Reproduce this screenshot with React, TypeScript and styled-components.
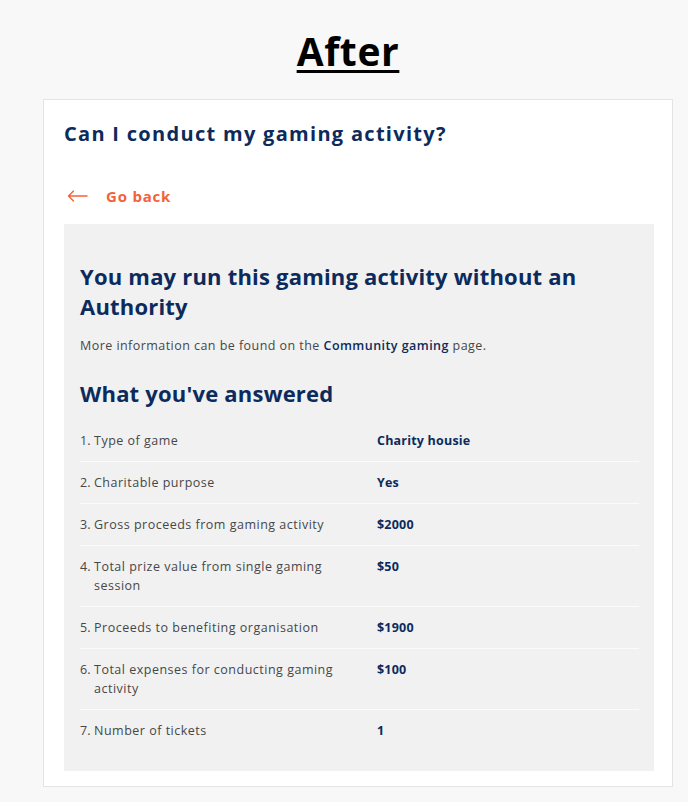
import React from "react";
import styled, { createGlobalStyle } from "styled-components";

const Global = createGlobalStyle`
  html, body { margin: 0; padding: 0; background: #f8f8f8; }
  body { font-family: "Open Sans", "Liberation Sans", sans-serif; }
  * { box-sizing: border-box; }
`;

const navy = "#0c2b5c";
const orange = "#f4623a";

const Page = styled.div`
  width: 688px;
  padding: 28px 0 16px 0;
  display: flex;
  flex-direction: column;
`;

const Title = styled.h1`
  margin: 0 0 25px 0;
  padding-left: 8px;
  text-align: center;
  font-size: 39px;
  line-height: 46px;
  font-weight: 700;
  letter-spacing: 0.6px;
  color: #000;
  text-decoration: underline;
  text-decoration-thickness: 3px;
  text-underline-offset: 4px;
`;

const Card = styled.section`
  width: 630px;
  margin-left: 43px;
  background: #fff;
  border: 1px solid #e4e4e4;
  padding: 20px 18px 15px 20px;
`;

const CardHeading = styled.h2`
  margin: 0;
  font-size: 20px;
  line-height: 28px;
  font-weight: 700;
  letter-spacing: 1.3px;
  color: ${navy};
`;

const BackLink = styled.a`
  display: flex;
  align-items: center;
  gap: 18px;
  margin: 36px 0 0 3px;
  height: 24px;
  color: ${orange};
  font-size: 15px;
  font-weight: 700;
  letter-spacing: 0.8px;
  text-decoration: none;
  cursor: pointer;
`;

const Panel = styled.div`
  margin-top: 16px;
  background: #f1f1f1;
  padding: 37px 15px 19px 16px;
`;

const ResultHeading = styled.h3`
  margin: 0;
  font-size: 22px;
  line-height: 30px;
  font-weight: 700;
  letter-spacing: 0.2px;
  color: ${navy};
`;

const Paragraph = styled.p`
  margin: 16px 0 0 0;
  font-size: 12.5px;
  line-height: 18px;
  letter-spacing: 0.45px;
  color: #474747;
`;

const InlineLink = styled.a`
  color: ${navy};
  font-weight: 600;
  text-decoration: none;
`;

const SectionHeading = styled.h3`
  margin: 23px 0 12px 0;
  font-size: 22px;
  line-height: 30px;
  font-weight: 700;
  letter-spacing: 0.2px;
  color: ${navy};
`;

const Answers = styled.ol`
  list-style: none;
  margin: 0;
  padding: 0;
`;

const Row = styled.li<{ $last?: boolean }>`
  display: grid;
  grid-template-columns: 297px 1fr;
  padding: 11px 0 11px 0;
  border-bottom: ${(p) => (p.$last ? "1px solid transparent" : "1px solid #fbfbfb")};
`;

const Label = styled.div`
  display: flex;
  width: 275px;
  font-size: 12.5px;
  line-height: 19px;
  letter-spacing: 0.5px;
  color: #474747;
`;

const Num = styled.span`
  flex: 0 0 14px;
  letter-spacing: 0;
`;

const Value = styled.div`
  font-size: 12.5px;
  line-height: 19px;
  font-weight: 700;
  letter-spacing: 0.2px;
  color: ${navy};
`;

const answers: [string, string][] = [
  ["Type of game", "Charity housie"],
  ["Charitable purpose", "Yes"],
  ["Gross proceeds from gaming activity", "$2000"],
  ["Total prize value from single gaming session", "$50"],
  ["Proceeds to benefiting organisation", "$1900"],
  ["Total expenses for conducting gaming activity", "$100"],
  ["Number of tickets", "1"],
];

const Arrow = () => (
  <svg width="21" height="12" viewBox="0 0 21 12" fill="none">
    <path d="M20 6H1.5M6.5 1L1.5 6l5 5" stroke={orange} strokeWidth="1.4" strokeLinecap="round" strokeLinejoin="round" />
  </svg>
);

export default function App() {
  return (
    <>
      <Global />
      <Page>
        <Title>After</Title>
        <Card>
          <CardHeading>Can I conduct my gaming activity?</CardHeading>
          <BackLink>
            <Arrow />
            Go back
          </BackLink>
          <Panel>
            <ResultHeading>You may run this gaming activity without an Authority</ResultHeading>
            <Paragraph>
              More information can be found on the <InlineLink>Community gaming</InlineLink> page.
            </Paragraph>
            <SectionHeading>What you've answered</SectionHeading>
            <Answers>
              {answers.map(([q, a], i) => (
                <Row key={q} $last={i === answers.length - 1}>
                  <Label>
                    <Num>{i + 1}.</Num>
                    <span>{q}</span>
                  </Label>
                  <Value>{a}</Value>
                </Row>
              ))}
            </Answers>
          </Panel>
        </Card>
      </Page>
    </>
  );
}
